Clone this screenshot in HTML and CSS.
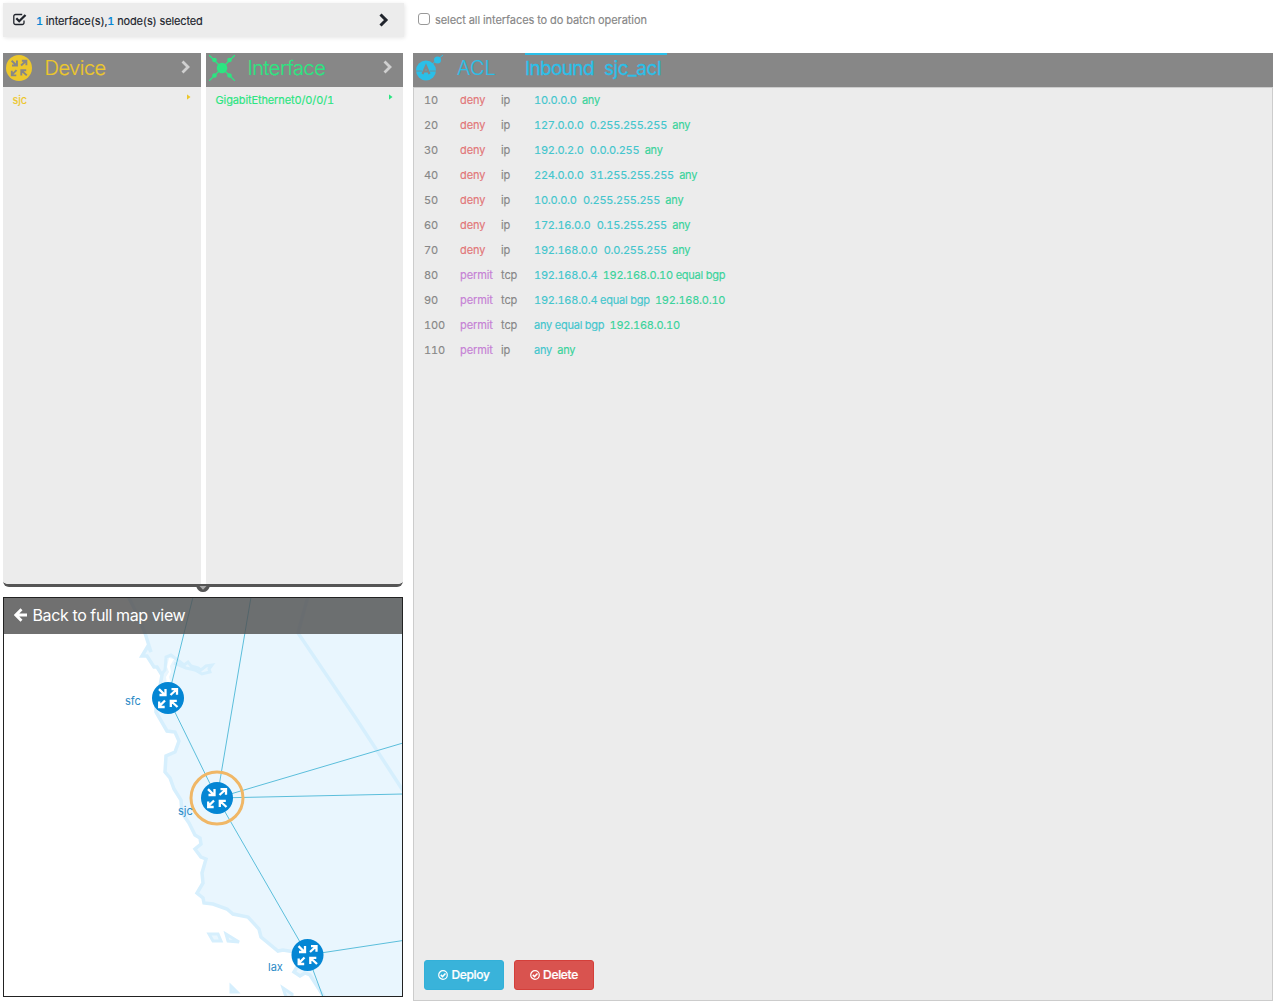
FILE: index.html
```
<!DOCTYPE html>
<html lang="en">
<head>
<meta charset="utf-8">
<title>ACL Manager</title>
<link rel="stylesheet" href="styles.css">
</head>
<body>
<svg class="defs" width="0" height="0">
  <defs>
    <g id="arrows" fill="none" stroke-width="2.300">
      <path d="M-9-8.800L-3-3M-2.500-9v6H-8.500M2.500-3L8.500-8.500M3.500-8.800h5.500v5.500M-3 2.500L-8.500 8M-8.800 3.500v5.500h5.500M9.500 9L3 3M2.800 9V2.800h6"/>
    </g>
    <g id="node">
      <circle r="16" fill="#0486d4"/>
      <use href="#arrows" stroke="#fff"/>
    </g>
    <g id="check-circle" fill="none" stroke="#fff">
      <circle cx="5" cy="5" r="4.300" stroke-width="1.200"/>
      <path d="M2.800 4.900l1.700 1.700 3-3.100" stroke-width="1.500"/>
    </g>
  </defs>
</svg>
<div class="page">
  <aside class="side">
    <div class="summary">
      <svg class="check" width="14" height="13" viewBox="0 0 14 13" fill="none" stroke="#20242c"><path d="M11 7.500v2.200a1.800 1.800 0 0 1-1.800 1.800H2.600A1.800 1.800 0 0 1 .8 9.700V3.300A1.800 1.800 0 0 1 2.600 1.500h6.600" stroke-width="1.300"/><path d="M3.300 5.300l2.900 2.900L12.500 2" stroke-width="2.300"/></svg>
      <span class="summary-text"><b>1</b> interface(s),<b>1</b> node(s) selected</span>
      <svg class="chev" width="10" height="14" viewBox="0 0 10 14" fill="none" stroke="#20242c" stroke-width="3"><path d="M1.500 1.500L7 7l-5.500 5.500"/></svg>
    </div>
    <div class="lists">
      <section class="list device">
        <header>
          <svg width="26" height="26" viewBox="-13 -13 26 26"><circle r="13" fill="#ecc72b"/><use href="#arrows" stroke="#878787" transform="scale(.82)"/></svg>
          <h2>Device</h2>
          <svg class="chev" width="10" height="14" viewBox="0 0 10 14" fill="none" stroke="#d0d0d0" stroke-width="2.800"><path d="M1.500 1.500L7 7l-5.500 5.500"/></svg>
        </header>
        <div class="item"><span>sjc</span><i></i></div>
      </section>
      <section class="list interface">
        <header>
          <svg width="26" height="26" viewBox="-13 -13 26 26" fill="#2be581" stroke="#2be581"><path d="M-13-13L13 13M13-13L-13 13" stroke-width="1.300"/><circle r="5.300" stroke="none"/><g stroke="none"><circle cx="-7.500" cy="-8" r="2.300"/><circle cx="7.500" cy="-8" r="2.300"/><circle cx="-7.500" cy="7.500" r="2.300"/><circle cx="7.500" cy="7.500" r="2.300"/></g></svg>
          <h2>Interface</h2>
          <svg class="chev" width="10" height="14" viewBox="0 0 10 14" fill="none" stroke="#d0d0d0" stroke-width="2.800"><path d="M1.500 1.500L7 7l-5.500 5.500"/></svg>
        </header>
        <div class="item"><span>GigabitEthernet0/0/0/1</span><i></i></div>
      </section>
    </div>
    <div class="handle"><svg width="14" height="6" viewBox="0 0 14 6"><path d="M0 0h14q-2 6-7 6T0 0z" fill="#555"/><path d="M3.500 0h7L7 3.800z" fill="#aaa"/></svg></div>
    <div class="map">
      <svg class="map-canvas" width="398" height="398" viewBox="4 598 398 398">
        <g fill="#e9f6fe" stroke="#d6effd" stroke-width="3.500">
          <path d="M127 594L135 610L145 633L151 652L148 646L142 656L147 656L154 667L157 667L162 675L160 686L156 700V712L167 731L175 732L179 741L175 752L166 756L165 772L170 778L174 789L181 800L182 813L189 823L195 835L200 838L201 844L195 849L201 857L206 859L202 873L203 883L197 893L203 898L204 903L213 904L227 909L233 914L248 917L259 929L261 937L278 951L283 950L295 952L297 967L294 972L300 976L305 973L310 975L326 1000H410V590H127z"/>
          <path d="M308 596L298 633L357 720L404 792" fill="none"/>
          <path d="M161 675l4-5 1-13 5-2 8 6 5 4 4-3 3 4 7 2 3 2 5-4 6-1-3 4 1 3-8 2-7-4-9-2-7-3-5-2" fill="none" stroke-width="3"/>
          <path d="M209 934h9l3 7h-8zM226 934l13 8-11-1zM231 986l6 6h-6zM283 988l9 6v6h-5z" stroke-width="3"/>
        </g>
        <path d="M169 658l5 1-4 7 1 6-2 5 2 7h-4l-1-7 3-5-2-5z" fill="#fff"/>
        <path d="M193 597L168 698L217 798L307.500 955L323 997M251 597L217 798L403 743M217 798L403 794M307.500 955L403 940.500" fill="none" stroke="#5bbedb"/>
        <circle cx="217" cy="798" r="26" fill="none" stroke="#f0b766" stroke-width="3"/>
        <use href="#node" x="168" y="698"/>
        <use href="#node" x="217" y="798"/>
        <use href="#node" x="307.500" y="955"/>
        <g class="labels"><text x="125" y="705">sfc</text><text x="178" y="815">sjc</text><text x="268" y="971">lax</text></g>
      </svg>
      <div class="back"><svg width="13" height="14" viewBox="0 0 13 14" fill="none" stroke="#fff" stroke-width="2.800"><path d="M13 7H2.500M7.500 1.200L1.800 7l5.700 5.800"/></svg><span>Back to full map view</span></div>
    </div>
  </aside>
  <main class="main">
    <label class="batch"><span class="box"></span><span>select all interfaces to do batch operation</span></label>
    <section class="acl">
      <header>
        <svg width="28" height="28" viewBox="0 0 28 28"><circle cx="10" cy="17.500" r="10" fill="#2bbfe8"/><circle cx="21.500" cy="7" r="3.500" fill="#2bbfe8"/><path d="M15 12L27 2" stroke="#2bbfe8"/><path d="M6.500 21L10 13L13.500 21M7.500 18.500h5" fill="none" stroke="#878787" stroke-width="2.200"/><path d="M0 18h6M14 18h6" stroke="#878787" stroke-width=".8"/></svg>
        <h2>ACL</h2>
        <div class="tab"><span>Inbound</span><span>sjc_acl</span></div>
      </header>
      <div class="rules">
        <div class="rule"><span>10</span><span class="deny">deny</span><span>ip</span><p>10.0.0.0 <em>any</em></p></div>
        <div class="rule"><span>20</span><span class="deny">deny</span><span>ip</span><p>127.0.0.0 <u>0.255.255.255</u> <em>any</em></p></div>
        <div class="rule"><span>30</span><span class="deny">deny</span><span>ip</span><p>192.0.2.0 <u>0.0.0.255</u> <em>any</em></p></div>
        <div class="rule"><span>40</span><span class="deny">deny</span><span>ip</span><p>224.0.0.0 <u>31.255.255.255</u> <em>any</em></p></div>
        <div class="rule"><span>50</span><span class="deny">deny</span><span>ip</span><p>10.0.0.0 <u>0.255.255.255</u> <em>any</em></p></div>
        <div class="rule"><span>60</span><span class="deny">deny</span><span>ip</span><p>172.16.0.0 <u>0.15.255.255</u> <em>any</em></p></div>
        <div class="rule"><span>70</span><span class="deny">deny</span><span>ip</span><p>192.168.0.0 <u>0.0.255.255</u> <em>any</em></p></div>
        <div class="rule"><span>80</span><span class="permit">permit</span><span>tcp</span><p>192.168.0.4 <em>192.168.0.10 equal bgp</em></p></div>
        <div class="rule"><span>90</span><span class="permit">permit</span><span>tcp</span><p>192.168.0.4 equal bgp <em>192.168.0.10</em></p></div>
        <div class="rule"><span>100</span><span class="permit">permit</span><span>tcp</span><p>any equal bgp <em>192.168.0.10</em></p></div>
        <div class="rule"><span>110</span><span class="permit">permit</span><span>ip</span><p>any <em>any</em></p></div>
      </div>
      <footer>
        <button class="btn deploy"><svg width="10" height="10"><use href="#check-circle"/></svg>Deploy</button>
        <button class="btn delete"><svg width="10" height="10"><use href="#check-circle"/></svg>Delete</button>
      </footer>
    </section>
  </main>
</div>
</body>
</html>
```

FILE: styles.css
```
* { box-sizing: border-box; }
body { margin: 0; background: #fff; font-family: Inter, "Liberation Sans", sans-serif; font-size: 11px; color: #878787; font-variant-numeric: tabular-nums; }
.defs { display: block; position: absolute; }
.page { display: flex; gap: 10px; height: 1005px; padding: 3px 4px 4px 3px; }
h2 { margin: 0; font-size: 20px; font-weight: 300; line-height: 30px; -webkit-text-stroke: .2px; }
.side { width: 400px; display: flex; flex-direction: column; }
.summary { height: 34px; width: 401px; padding: 0 15px 0 10px; display: flex; align-items: center; background: #ececec; box-shadow: 1px 1px 4px rgba(0,0,0,.1); color: #20242c; }
.summary .check { margin: -2px 9px 0 0; }
.summary-text { flex: 1; padding-top: 2px; letter-spacing: -.15px; -webkit-text-stroke: .15px; }
.summary b { font-weight: 500; color: #0486d4; }
.lists { margin-top: 16px; height: 534px; display: flex; gap: 5px; border-bottom: 3px solid #555; border-radius: 0 0 6px 6px; overflow: hidden; }
.list { background: #ececec; width: 198px; }
.list.interface { width: 197px; }
.list header, .acl header { height: 34px; background: #878787; display: flex; }
.list header { padding: 2px 10px 0 3px; }
.list h2 { margin-left: 12.500px; flex: 1; line-height: 26px; letter-spacing: -.5px; }
.list header .chev { margin-top: 5px; }
.device { color: #ecc72b; }
.interface { color: #2be581; }
.item { display: flex; justify-content: space-between; padding: 5px 10.500px 0 9.500px; line-height: 16px; letter-spacing: -.12px; -webkit-text-stroke: .15px; }
.item i { width: 4px; height: 6px; margin-top: 2px; background: currentColor; clip-path: polygon(0 0,100% 50%,0 100%); }
.handle { height: 10px; display: flex; justify-content: center; margin: -1px 0 1px; }
.map { height: 400px; border: 1px solid #222; position: relative; overflow: hidden; }
.map-canvas { display: block; }
.labels { fill: #2a8ac6; font-size: 11px; }
.back { position: absolute; left: 0; top: 0; right: 0; height: 36px; display: flex; align-items: center; padding: 0 0 2px 10px; gap: 5.500px; background: rgba(80,80,80,.82); color: #fff; font-size: 16px; letter-spacing: -.35px; }
.main { flex: 1; display: flex; flex-direction: column; }
.batch { height: 50px; padding: 9px 0 0 5px; display: flex; gap: 5px; line-height: 17px; letter-spacing: -.06px; }
.box { width: 12px; height: 12px; border: 1px solid #999; border-radius: 3px; margin-top: 1px; }
.acl { width: 860px; height: 948px; background: #ececec; border: 1px solid #ccc; border-top: 0; display: flex; flex-direction: column; }
.acl header { color: #2bbfe8; margin: 0 -1px; padding-left: 3px; }
.acl h2 { margin-left: 13px; width: 68px; }
.tab { border-top: 2px solid #2bbfe8; width: 142px; display: flex; gap: 10px; font-size: 19px; line-height: 28px; letter-spacing: -.65px; -webkit-text-stroke: .3px; }
.tab span + span { letter-spacing: -.45px; }
.rules { flex: 1; border-top: 1px solid #ccc; }
.rule { display: grid; grid-template-columns: 36px 41px 33px 1fr; height: 25px; line-height: 24px; padding-left: 10px; letter-spacing: -.1px; }
.rule p { margin: 0; color: #43c6cd; white-space: nowrap; letter-spacing: -.23px; }
.rule em, .rule u { font-style: normal; text-decoration: none; }
.rule u { margin-left: 3.500px; }
.rule em { color: #3ad39b; margin-left: 2.500px; }
.deny { color: #e27678; }
.permit { color: #c681d5; }
.rules, .batch { -webkit-text-stroke: .15px; }
footer { display: flex; gap: 10px; padding: 0 10px 10px; }
.btn { width: 80px; height: 30px; border: 1px solid #33b0d8; border-radius: 3px; background: #39b3da; color: #fff; font: 500 12px Inter, sans-serif; letter-spacing: -.33px; display: flex; align-items: center; justify-content: center; gap: 3px; padding: 0 0 1px; -webkit-text-stroke: .2px; }
.btn.delete { background: #d9534f; border-color: #d43f3a; }
```
